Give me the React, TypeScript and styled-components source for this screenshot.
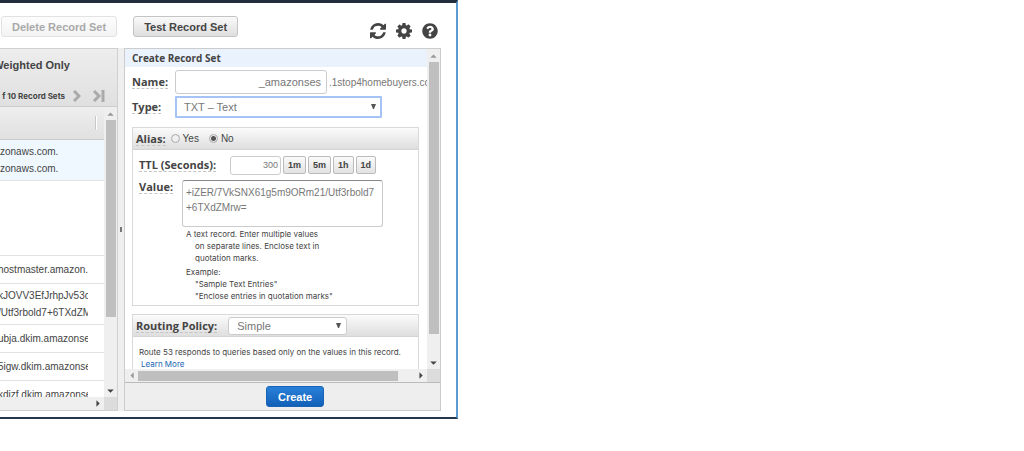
import React from "react";
import styled, { createGlobalStyle, css } from "styled-components";
import { FaQuestionCircle } from "react-icons/fa";

const sans = `"Liberation Sans", Arial, sans-serif`;
const label = `"Open Sans", Verdana, sans-serif`;
const small = `Inter, Arial, sans-serif`;

const GlobalStyle = createGlobalStyle`
  *, *::before, *::after { box-sizing: border-box; }
  body { margin: 0; background: #fff; color: #444; font-family: ${sans}; font-size: 10px; }
  button, input, select, textarea { font-family: inherit; margin: 0; }
`;

const Window = styled.main`
  width: 44.75%;
  min-width: 440px;
  display: flex;
  flex-direction: column;
  overflow: hidden;
  border-top: 3px solid #232f3e;
  border-right: 2px solid #5b9bd0;
  border-bottom: 2px solid #26374d;
`;

const Toolbar = styled.header`
  height: 45px;
  display: flex;
  align-items: flex-start;
  gap: 16px;
  padding: 13px 18px 0 1px;
`;

const ToolButton = styled.button`
  height: 21px;
  padding: 0 10px;
  border: 1px solid #c4c4c4;
  border-radius: 3px;
  background: linear-gradient(#fafafa, #dedede);
  color: #444;
  font-size: 11px;
  font-weight: bold;
  white-space: nowrap;
  &:disabled {
    border-color: #e2e2e2;
    background: linear-gradient(#fdfdfd, #f3f3f3);
    color: #a9a9a9;
  }
`;

const IconGroup = styled.div`
  display: flex;
  gap: 10px;
  margin: 7px 0 0 auto;
`;

const IconButton = styled.button`
  display: flex;
  width: 16px;
  height: 16px;
  padding: 0;
  border: 0;
  background: none;
  color: #444;
  svg { width: 16px; height: 16px; }
`;

const Panes = styled.div`
  display: flex;
  height: 363px;
  margin: 0 15px 6px 0;
`;

const ListPane = styled.section`
  flex: none;
  width: 118px;
  display: flex;
  flex-direction: column;
  border: 1px solid #d0d0d0;
  border-left: 0;
  background: #eee;
`;

const ListHeader = styled.div`
  height: 58px;
  display: flex;
  flex-direction: column;
  justify-content: space-between;
  padding: 8px 0 3px;
  border-bottom: 1px solid #ccc;
  background: linear-gradient(#ededed, #e0e0e0);
  font-weight: bold;
`;

const FilterText = styled.div`
  width: 70px;
  display: flex;
  justify-content: flex-end;
  overflow: hidden;
  font-size: 11px;
  line-height: 16px;
  white-space: nowrap;
`;

const Pager = styled.div`
  display: flex;
  align-items: center;
  gap: 8px;
  font-family: ${small};
  font-size: 8px;
  line-height: 14px;
`;

const PagerText = styled.div`
  width: 65px;
  display: flex;
  justify-content: flex-end;
  overflow: hidden;
  white-space: nowrap;
`;

const PagerButton = styled.button`
  display: flex;
  padding: 0;
  border: 0;
  background: none;
  & + & { margin-left: 4px; }
`;

const ScrollArea = styled.div`
  flex: 1;
  min-height: 0;
  display: flex;
`;

const Records = styled.div`
  flex: 1;
  min-width: 0;
  overflow: hidden;
  background: #fff;
`;

const RecordsHeader = styled.div`
  height: 33px;
  display: flex;
  justify-content: flex-end;
  align-items: center;
  padding-right: 7px;
  border-bottom: 1px solid #ccc;
  background: linear-gradient(#efefef, #e0e0e0);
  &::after {
    content: "";
    width: 2px;
    height: 14px;
    border-left: 1px solid #c8c8c8;
    background: #fff;
  }
`;

const RecordRow = styled.div<{ $selected?: boolean; $dense?: boolean; $tall?: boolean }>`
  padding: ${(p) => (p.$dense ? 3 : 5)}px 16px ${(p) => (p.$dense ? 3 : 5)}px 0;
  border-bottom: 1px solid #e2e2e2;
  font-size: 10px;
  line-height: 17px;
  text-indent: -2px;
  white-space: nowrap;
  ${(p) => p.$selected && css`background: #eff8ff; text-indent: 0;`}
  ${(p) => p.$tall && css`height: 75px;`}
`;

const RecordLine = styled.div`
  overflow: hidden;
`;

const Splitter = styled.div`
  flex: none;
  width: 6px;
  display: flex;
  align-items: center;
  justify-content: center;
  background: #efefef;
  &::after { content: ""; width: 2px; height: 5px; background: #777; }
`;

const FormPane = styled.form`
  flex: 1;
  min-width: 0;
  display: flex;
  flex-direction: column;
  border: 1px solid #ccc;
  background: #fff;
`;

const FormBody = styled.div`
  flex: 1;
  min-width: 0;
  overflow: hidden;
`;

const FormTitle = styled.h2`
  margin: 0;
  padding-left: 7px;
  background: #eaf2fe;
  font: bold 10px/18px ${label};
`;

const Fields = styled.div`
  padding: 3px 8px 0 7px;
`;

const Field = styled.div`
  display: flex;
  align-items: center;
  gap: 2px;
  margin-bottom: 2px;
`;

const FieldName = styled.div`
  flex: none;
  width: 41px;
  display: flex;
`;

const labelStyle = css`
  border-bottom: 1px dashed #c4c4c4;
  font: bold 11px/13px ${label};
  white-space: nowrap;
`;
const Label = styled.label`${labelStyle}`;
const Legend = styled.span`${labelStyle}`;

const inputStyle = css`
  border: 1px solid #ccc;
  border-radius: 3px;
  background: #fff;
  color: #777;
  outline: 0;
`;

const NameInput = styled.input`
  ${inputStyle}
  flex: none;
  width: 152px;
  height: 24px;
  padding: 0 5px;
  font-size: 11px;
  text-align: right;
`;

const Suffix = styled.span`
  color: #777;
  font-size: 10px;
  white-space: nowrap;
`;

const SelectWrap = styled.div<{ $wide?: boolean }>`
  position: relative;
  flex: none;
  width: ${(p) => (p.$wide ? 207 : 119)}px;
  margin-left: ${(p) => (p.$wide ? 0 : 11)}px;
  select {
    ${inputStyle}
    display: block;
    appearance: none;
    width: 100%;
    height: ${(p) => (p.$wide ? 22 : 18)}px;
    padding: 0 8px;
    font-size: 11px;
    ${(p) => p.$wide && css`border: 2px solid #a6c3f5; border-radius: 1px; padding: 0 7px;`}
  }
  svg {
    position: absolute;
    right: 6px;
    top: calc(50% - 3px);
    pointer-events: none;
  }
`;

const Card = styled.section`
  margin-top: 9px;
  border: 1px solid #d9d9d9;
  & + & { margin-top: 8px; }
`;

const CardHeader = styled.div`
  height: 22px;
  display: flex;
  align-items: center;
  padding-left: 3px;
  border-bottom: 1px solid #d4d4d4;
  background: linear-gradient(#fbfbfb, #dedede);
`;

const Choice = styled.label`
  display: flex;
  align-items: center;
  gap: 3px;
  margin-left: 5px;
  font-size: 10px;
  & + & { margin-left: 10px; }
  input {
    appearance: none;
    width: 9px;
    height: 9px;
    border: 1px solid #aaa;
    border-radius: 50%;
    background: #eee;
  }
  input:checked { background: radial-gradient(#555 0 2px, #eee 3px); }
`;

const AliasBody = styled.div`
  padding: 5px 6px 3px;
`;

const TtlRow = styled.div`
  display: flex;
  align-items: center;
  gap: 2px;
  height: 20px;
`;

const TtlName = styled.div`
  flex: none;
  width: 89px;
  display: flex;
`;

const TtlInput = styled.input`
  ${inputStyle}
  flex: none;
  width: 51px;
  height: 19px;
  padding: 0 2px;
  font-size: 9px;
  text-align: right;
`;

const TtlButton = styled.button`
  height: 18px;
  padding: 0 4px;
  border: 1px solid #bbb;
  border-radius: 2px;
  background: linear-gradient(#fafafa, #e2e2e2);
  color: #444;
  font-size: 9px;
  font-weight: bold;
`;

const ValueRow = styled.div`
  display: flex;
  align-items: flex-start;
  gap: 2px;
  margin-top: 5px;
`;

const ValueInput = styled.textarea`
  ${inputStyle}
  display: block;
  width: 201px;
  height: 47px;
  padding: 4px 3px;
  border-top-color: #888;
  font-size: 10px;
  line-height: 15px;
  resize: none;
  overflow: hidden;
`;

const Help = styled.div`
  padding-left: 4px;
  font-family: ${small};
  font-size: 8px;
  line-height: 12px;
  white-space: nowrap;
  p { margin: 1px 0 0; }
  p + p { margin-top: 2px; }
  span { display: block; padding-left: 9px; }
`;

const PolicyNote = styled.p`
  margin: 0;
  padding: 9px 6px;
  font-family: ${small};
  font-size: 8px;
  line-height: 12px;
  white-space: nowrap;
`;

const Link = styled.a`
  display: block;
  padding-left: 2px;
  color: #1a66b3;
  text-decoration: none;
`;

const Footer = styled.footer`
  height: 28px;
  display: flex;
  align-items: center;
  justify-content: center;
  padding-left: 25px;
  border-top: 1px solid #bbb;
  background: #eee;
`;

const CreateButton = styled.button`
  width: 58px;
  height: 21px;
  padding: 0;
  border: 1px solid #1763b5;
  border-radius: 3px;
  background: linear-gradient(#2a80d8, #1160b8);
  color: #fff;
  font-size: 11px;
  font-weight: bold;
`;

const Bar = styled.div<{ $horizontal?: boolean }>`
  flex: none;
  display: flex;
  align-items: center;
  justify-content: space-between;
  background: #efefef;
  ${(p) =>
    p.$horizontal
      ? css`height: 13px; flex: 1;`
      : css`width: 13px; flex-direction: column;`}
`;

const BarRow = styled.div`
  display: flex;
  height: 13px;
`;

const Corner = styled.div`
  width: 13px;
  background: #dcdcdc;
`;

const Thumb = styled.div<{ $share: number; $horizontal?: boolean }>`
  background: #bfbfbf;
  ${(p) =>
    p.$horizontal
      ? css`height: 10px; width: ${p.$share}%; margin-right: auto;`
      : css`width: 10px; height: ${p.$share}%; margin-bottom: auto;`}
`;

const arrows = {
  up: "M3 8 L6 5 L9 8 Z",
  down: "M3 5 L9 5 L6 8 Z",
  left: "M8 3 L5 6 L8 9 Z",
  right: "M5 3 L8 6 L5 9 Z",
};

const ArrowSvg = styled.svg`
  flex: none;
  display: block;
`;

function Arrow({ to, dim }: { to: keyof typeof arrows; dim?: boolean }) {
  return (
    <ArrowSvg width="13" height="13" viewBox="0 0 12 12" fill={dim ? "#999" : "#444"}>
      <path d={arrows[to]} />
    </ArrowSvg>
  );
}

function Caret() {
  return (
    <svg width="5" height="5" viewBox="0 0 5 5" fill="#555">
      <path d="M0 0 H5 L3 5 H2 Z" />
    </svg>
  );
}

function RefreshIcon() {
  return (
    <svg viewBox="0 128 1536 1536" fill="currentColor">
      <path d="M1511 1056q0 5-1 7-64 268-268 434.5t-478 166.5q-146 0-282.500-55t-243.500-157l-129 129q-19 19-45 19t-45-19-19-45v-448q0-26 19-45t45-19h448q26 0 45 19t19 45-19 45l-137 137q71 66 161 102t187 36q134 0 250-65t186-179q11-17 53-117 8-23 30-23h192q13 0 22.500 9.500t9.500 22.500zm25-800v448q0 26-19 45t-45 19h-448q-26 0-45-19t-19-45 19-45l138-138q-148-137-349-137-134 0-250 65t-186 179q-11 17-53 117-8 23-30 23h-199q-13 0-22.500-9.500t-9.500-22.500v-7q65-268 270-434.500t480-166.500q146 0 284 55.500t245 156.500l130-129q19-19 45-19t45 19 19 45z" />
    </svg>
  );
}

function GearIcon() {
  return (
    <svg viewBox="128 128 1536 1536" fill="currentColor">
      <path d="M1152 896q0-106-75-181t-181-75-181 75-75 181 75 181 181 75 181-75 75-181zm512-109v222q0 12-8 23t-20 13l-185 28q-19 54-39 91 35 50 107 138 10 12 10 25t-9 23q-27 37-99 108t-94 71q-12 0-26-9l-138-108q-44 23-91 38-16 136-29 186-7 28-36 28h-222q-14 0-24.500-8.500t-11.500-21.500l-28-184q-49-16-90-37l-141 107q-10 9-25 9-14 0-25-11-126-114-165-168-7-10-7-23 0-12 8-23 15-21 51-66.500t54-70.500q-27-50-41-99l-183-27q-13-2-21-12.500t-8-23.500v-222q0-12 8-23t19-13l186-28q14-46 39-92-40-57-107-138-10-12-10-24 0-10 9-23 26-36 98.500-107.500t94.500-71.500q13 0 26 10l138 107q44-23 91-38 16-136 29-186 7-28 36-28h222q14 0 24.500 8.500t11.500 21.500l28 184q49 16 90 37l142-107q9-9 24-9 13 0 25 10 129 119 165 170 7 8 7 22 0 12-8 23-15 21-51 66.500t-54 70.500q26 50 41 98l183 28q13 2 21 12.500t8 23.500z" />
    </svg>
  );
}

type RecordData = { lines: string[]; selected?: boolean; dense?: boolean; tall?: boolean };

const rows: RecordData[] = [
  { lines: ["zonaws.com.", "zonaws.com."], selected: true, dense: true },
  { lines: [], tall: true },
  { lines: ["hostmaster.amazon."] },
  { lines: ["kJOVV3EfJrhpJv53o", "/Utf3rbold7+6TXdZM"], dense: true },
  { lines: ["ubja.dkim.amazonses"] },
  { lines: ["5igw.dkim.amazonses"] },
  { lines: ["kdizf.dkim.amazonses"] },
];

export default function App() {
  return (
    <>
      <GlobalStyle />
      <Window>
        <Toolbar>
          <ToolButton disabled>Delete Record Set</ToolButton>
          <ToolButton>Test Record Set</ToolButton>
          <IconGroup>
            <IconButton aria-label="Refresh"><RefreshIcon /></IconButton>
            <IconButton aria-label="Settings"><GearIcon /></IconButton>
            <IconButton aria-label="Help"><FaQuestionCircle /></IconButton>
          </IconGroup>
        </Toolbar>
        <Panes>
          <ListPane>
            <ListHeader>
              <FilterText>Weighted Only</FilterText>
              <Pager>
                <PagerText>f 10 Record Sets</PagerText>
                <PagerButton aria-label="Next page">
                  <svg width="8" height="12" viewBox="0 0 8 12" fill="none" stroke="#aaa" strokeWidth="3">
                    <path d="M1 1 L6 6 L1 11" />
                  </svg>
                </PagerButton>
                <PagerButton aria-label="Last page">
                  <svg width="12" height="12" viewBox="0 0 12 12" fill="none" stroke="#aaa" strokeWidth="3">
                    <path d="M1 1 L6 6 L1 11 M10 0 V12" />
                  </svg>
                </PagerButton>
              </Pager>
            </ListHeader>
            <ScrollArea>
              <Records>
                <RecordsHeader />
                {rows.map((row, i) => (
                  <RecordRow key={i} $selected={row.selected} $dense={row.dense} $tall={row.tall}>
                    {row.lines.map((line, j) => (
                      <RecordLine key={j}>{line}</RecordLine>
                    ))}
                  </RecordRow>
                ))}
              </Records>
              <Bar>
                <Arrow to="up" dim />
                <Thumb $share={68} />
                <Arrow to="down" />
              </Bar>
            </ScrollArea>
            <BarRow>
              <Bar $horizontal><span /><Arrow to="right" /></Bar>
              <Corner />
            </BarRow>
          </ListPane>
          <Splitter />
          <FormPane onSubmit={(e) => e.preventDefault()}>
            <ScrollArea>
              <FormBody>
                <FormTitle>Create Record Set</FormTitle>
                <Fields>
                  <Field>
                    <FieldName><Label htmlFor="name">Name:</Label></FieldName>
                    <NameInput id="name" defaultValue="_amazonses" />
                    <Suffix>.1stop4homebuyers.com.</Suffix>
                  </Field>
                  <Field>
                    <FieldName><Label htmlFor="type">Type:</Label></FieldName>
                    <SelectWrap $wide>
                      <select id="type"><option>TXT – Text</option></select>
                      <Caret />
                    </SelectWrap>
                  </Field>
                  <Card>
                    <CardHeader>
                      <Legend>Alias:</Legend>
                      <Choice><input type="radio" name="alias" />Yes</Choice>
                      <Choice><input type="radio" name="alias" defaultChecked />No</Choice>
                    </CardHeader>
                    <AliasBody>
                      <TtlRow>
                        <TtlName><Label htmlFor="ttl">TTL (Seconds):</Label></TtlName>
                        <TtlInput id="ttl" defaultValue="300" />
                        {["1m", "5m", "1h", "1d"].map((t) => (
                          <TtlButton key={t} type="button">{t}</TtlButton>
                        ))}
                      </TtlRow>
                      <ValueRow>
                        <FieldName><Label htmlFor="value">Value:</Label></FieldName>
                        <div>
                          <ValueInput id="value" defaultValue={"+iZER/7VkSNX61g5m9ORm21/Utf3rbold7\n+6TXdZMrw="} />
                          <Help>
                            <p>
                              A text record. Enter multiple values
                              <span>on separate lines. Enclose text in</span>
                              <span>quotation marks.</span>
                            </p>
                            <p>
                              Example:
                              <span>"Sample Text Entries"</span>
                              <span>"Enclose entries in quotation marks"</span>
                            </p>
                          </Help>
                        </div>
                      </ValueRow>
                    </AliasBody>
                  </Card>
                  <Card>
                    <CardHeader>
                      <Label htmlFor="policy">Routing Policy:</Label>
                      <SelectWrap>
                        <select id="policy"><option>Simple</option></select>
                        <Caret />
                      </SelectWrap>
                    </CardHeader>
                    <PolicyNote>
                      Route 53 responds to queries based only on the values in this record.
                      <Link href="#learn-more">Learn More</Link>
                    </PolicyNote>
                  </Card>
                </Fields>
              </FormBody>
              <Bar>
                <Arrow to="up" dim />
                <Thumb $share={85} />
                <Arrow to="down" />
              </Bar>
            </ScrollArea>
            <BarRow>
              <Bar $horizontal>
                <Arrow to="left" dim />
                <Thumb $share={86} $horizontal />
                <Arrow to="right" />
              </Bar>
              <Corner />
            </BarRow>
            <Footer>
              <CreateButton>Create</CreateButton>
            </Footer>
          </FormPane>
        </Panes>
      </Window>
    </>
  );
}
